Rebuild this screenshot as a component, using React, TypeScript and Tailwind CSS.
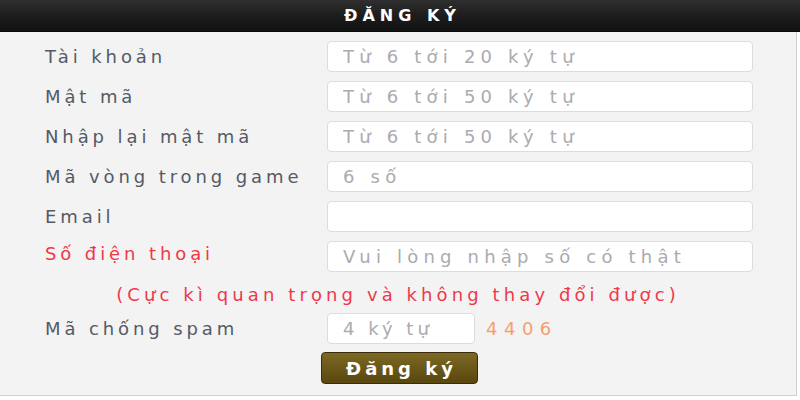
import React from 'react';

const fields = [
  { label: 'Tài khoản', placeholder: 'Từ 6 tới 20 ký tự' },
  { label: 'Mật mã', placeholder: 'Từ 6 tới 50 ký tự' },
  { label: 'Nhập lại mật mã', placeholder: 'Từ 6 tới 50 ký tự' },
  { label: 'Mã vòng trong game', placeholder: '6 số' },
  { label: 'Email', placeholder: '' },
  { label: 'Số điện thoại', placeholder: 'Vui lòng nhập số có thật', red: true },
];

const App = () => {
  return (
    <div className="w-[800px] h-[400px] bg-white font-['DejaVu_Sans',sans-serif] overflow-hidden">
      {/* Header */}
      <div className="h-[32px] flex items-center justify-center bg-gradient-to-b from-[#2f2f2f] via-[#1d1d1d] to-[#121212] border-b border-[#0a0a0a]">
        <span className="text-white font-bold text-[16px] tracking-[5px] pl-[5px]">ĐĂNG KÝ</span>
      </div>

      {/* Form body */}
      <div className="h-[364px] bg-[#f3f3f3] border-b border-[#cfcfcf] border-r w-[797px] pt-[9px]">
        <div className="flex flex-col gap-[10px] pl-[45px]">
          {fields.map((f) => (
            <div key={f.label} className="flex items-center h-[30px]">
              <label
                className={
                  'w-[282px] text-[18px] tracking-[3.9px] ' +
                  (f.red ? 'text-[#ee3a46] -mt-[6px]' : 'text-[#555a66]')
                }
              >
                {f.label}
              </label>
              <input
                className="w-[426px] h-[31px] bg-white border border-[#dcdcdc] rounded-[4px] pl-[15px] text-[18px] tracking-[5.2px] outline-none placeholder:text-[#a9abb0]"
                placeholder={f.placeholder}
              />
            </div>
          ))}
        </div>

        <div className="mt-[11px] h-[24px] flex items-center justify-center text-[18px] tracking-[4.1px] text-[#f0384c]">
          (Cực kì quan trọng và không thay đổi được)
        </div>

        <div className="mt-[7px] flex items-center h-[31px] pl-[45px]">
          <label className="w-[282px] text-[18px] tracking-[3.9px] text-[#555a66]">Mã chống spam</label>
          <input
            className="w-[148px] h-[31px] bg-white border border-[#dcdcdc] rounded-[4px] pl-[15px] text-[18px] tracking-[4px] outline-none placeholder:text-[#a9abb0]"
            placeholder="4 ký tự"
          />
          <span className="ml-[11px] text-[18px] tracking-[6.5px] text-[#f4a06e]">4406</span>
        </div>

        <div className="mt-[8px] flex pl-[321px]">
          <button className="w-[157px] h-[32px] rounded-[4px] border border-[#3b2d0c] bg-gradient-to-b from-[#7d6924] to-[#58470f] text-white font-bold text-[18px] tracking-[4px] pl-[4px]">
            Đăng ký
          </button>
        </div>
      </div>
    </div>
  );
};

export default App;
